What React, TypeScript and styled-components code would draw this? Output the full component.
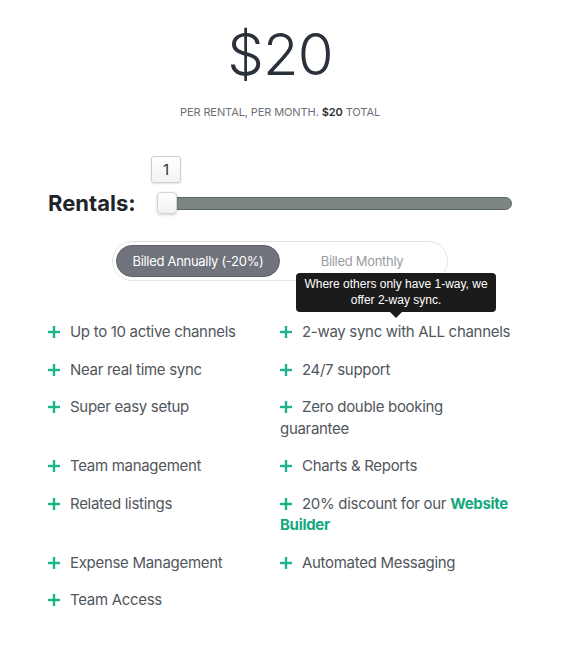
import React from "react";
import styled, { createGlobalStyle } from "styled-components";

const GlobalStyle = createGlobalStyle`
    html, body {
        margin: 0;
        padding: 0;
        background: #ffffff;
    }
    body {
        font-family: Inter, "Noto Sans", sans-serif;
        -webkit-font-smoothing: antialiased;
    }
`;

const Page = styled.main`
    width: 464px;
    padding: 25px 0 40px 48px;
`;

const PriceBlock = styled.section`
    display: flex;
    flex-direction: column;
    align-items: center;
`;

const Price = styled.h1`
    margin: 0;
    font-size: 58px;
    line-height: 1;
    font-weight: 300;
    color: #2b313a;
    letter-spacing: -0.8px;
`;

const PriceNote = styled.p`
    margin: 24px 0 0;
    font-size: 11px;
    line-height: 1;
    color: #6d7177;
    letter-spacing: -0.1px;

    strong {
        color: #2b313a;
        font-weight: 600;
    }
`;

const RentalsRow = styled.div`
    display: flex;
    align-items: center;
    margin-top: 74px;
`;

const RentalsLabel = styled.label`
    width: 88px;
    margin-right: 21px;
    font-size: 22px;
    line-height: 22px;
    font-weight: 700;
    color: #1f242b;
    letter-spacing: 0;
`;

const Slider = styled.div`
    position: relative;
    flex: 1;
    height: 22px;
    display: flex;
    align-items: center;
`;

const Track = styled.div`
    margin-left: 8px;
    flex: 1;
    height: 13px;
    box-sizing: border-box;
    border-radius: 7px;
    background: #7b8685;
    border: 1px solid #59625f;
`;

const Thumb = styled.div`
    position: absolute;
    left: 0;
    top: 0;
    width: 20px;
    height: 22px;
    box-sizing: border-box;
    border-radius: 4px;
    border: 1px solid #d2d2d2;
    background: linear-gradient(#ffffff, #f1f1f1);
    box-shadow: 0 1px 3px rgba(0, 0, 0, 0.18);
`;

const ValueBubble = styled.div`
    position: absolute;
    left: -6px;
    top: -36px;
    width: 30px;
    height: 27px;
    box-sizing: border-box;
    border-radius: 3px;
    border: 1px solid #cfcfcf;
    background: linear-gradient(#ffffff, #f3f3f3);
    box-shadow: 0 1px 2px rgba(0, 0, 0, 0.12);
    display: flex;
    align-items: center;
    justify-content: center;
    font-size: 15px;
    color: #333;
`;

const ToggleWrap = styled.div`
    display: flex;
    justify-content: center;
    margin-top: 27px;
`;

const Toggle = styled.div`
    display: flex;
    padding: 3px;
    border: 1px solid #e3e3e3;
    border-radius: 21px;
    background: #fff;
`;

const ToggleButton = styled.button<{ $active?: boolean }>`
    width: 164px;
    height: 32px;
    border-radius: 16px;
    border: ${(p) => (p.$active ? "1px solid #5e6168" : "none")};
    background: ${(p) => (p.$active ? "#70737b" : "transparent")};
    color: ${(p) => (p.$active ? "#ffffff" : "#9a9ca0")};
    font-family: Inter, "Noto Sans", sans-serif;
    font-size: 13px;
    letter-spacing: -0.3px;
    cursor: pointer;
    padding: 0;
`;

const FeatureGrid = styled.ul`
    list-style: none;
    margin: 40px 0 0;
    padding: 0;
    display: grid;
    grid-template-columns: 232px 232px;
    row-gap: 16px;
    align-items: start;
`;

const FeatureItem = styled.li`
    position: relative;
    font-size: 15px;
    line-height: 21.5px;
    color: #51565c;
    letter-spacing: -0.3px;

    a {
        color: #14a87f;
        font-weight: 700;
        text-decoration: none;
    }
`;

const PlusIcon = styled.svg`
    width: 12px;
    height: 12px;
    margin-right: 10px;
    vertical-align: -1px;
`;

const Tooltip = styled.div`
    position: absolute;
    left: 16px;
    bottom: calc(100% + 9px);
    width: 200px;
    box-sizing: border-box;
    padding: 3px 6px 4px;
    border-radius: 4px;
    background: #1b1b1b;
    color: #ffffff;
    font-family: "Liberation Sans", Arial, sans-serif;
    font-size: 12px;
    line-height: 16px;
    letter-spacing: 0;
    text-align: center;

    &::after {
        content: "";
        position: absolute;
        left: 94px;
        top: 100%;
        border-left: 6px solid transparent;
        border-right: 6px solid transparent;
        border-top: 6px solid #1b1b1b;
    }
`;

const Plus = () => (
    <PlusIcon viewBox="0 0 12 12" aria-hidden>
        <rect x="4.8" y="0" width="2.4" height="12" fill="#1cb48a" />
        <rect x="0" y="4.8" width="12" height="2.4" fill="#1cb48a" />
    </PlusIcon>
);

interface Feature {
    text: React.ReactNode;
    tip?: string;
}

const features: Feature[] = [
    { text: "Up to 10 active channels" },
    {
        text: "2-way sync with ALL channels",
        tip: "Where others only have 1-way, we offer 2-way sync.",
    },
    { text: "Near real time sync" },
    { text: "24/7 support" },
    { text: "Super easy setup" },
    { text: "Zero double booking guarantee" },
    { text: "Team management" },
    { text: "Charts & Reports" },
    { text: "Related listings" },
    {
        text: (
            <>
                20% discount for our <a href="#">Website Builder</a>
            </>
        ),
    },
    { text: "Expense Management" },
    { text: "Automated Messaging" },
    { text: "Team Access" },
];

export default function App() {
    return (
        <>
            <GlobalStyle />
            <Page>
                <PriceBlock>
                    <Price>$20</Price>
                    <PriceNote>
                        PER RENTAL, PER MONTH. <strong>$20</strong> TOTAL
                    </PriceNote>
                </PriceBlock>

                <RentalsRow>
                    <RentalsLabel>Rentals:</RentalsLabel>
                    <Slider>
                        <Track />
                        <Thumb />
                        <ValueBubble>1</ValueBubble>
                    </Slider>
                </RentalsRow>

                <ToggleWrap>
                    <Toggle>
                        <ToggleButton $active>Billed Annually (-20%)</ToggleButton>
                        <ToggleButton>Billed Monthly</ToggleButton>
                    </Toggle>
                </ToggleWrap>

                <FeatureGrid>
                    {features.map((f, idx) => (
                        <FeatureItem key={idx}>
                            {f.tip && <Tooltip>{f.tip}</Tooltip>}
                            <Plus />
                            {f.text}
                        </FeatureItem>
                    ))}
                </FeatureGrid>
            </Page>
        </>
    );
}
